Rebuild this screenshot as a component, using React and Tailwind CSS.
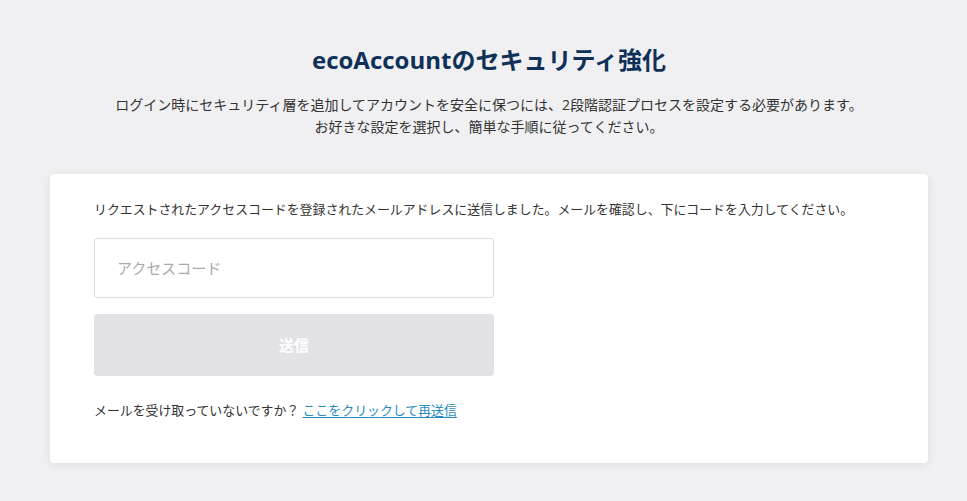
import React, { useState } from 'react';

export default function App() {
  const [code, setCode] = useState('');

  return (
    <div
      className="min-h-[501px] w-full bg-[#f0f0f2] pt-[44px] pb-[38px]"
      style={{ fontFamily: '"Open Sans", "Noto Sans CJK JP", sans-serif' }}
    >
      <div className="ml-[50px] mr-[39px]">
        {/* heading */}
        <h1 className="text-center text-[24px] leading-[32px] font-bold text-[#0f3057]">
          ecoAccountのセキュリティ強化
        </h1>
        <div className="mt-[18px] text-center text-[14px] leading-[22px] text-[#333]">
          <p>ログイン時にセキュリティ層を追加してアカウントを安全に保つには、2段階認証プロセスを設定する必要があります。</p>
          <p>お好きな設定を選択し、簡単な手順に従ってください。</p>
        </div>

        {/* card */}
        <div className="mt-[36px] h-[289px] rounded-[4px] bg-white px-[44px] pt-[24px] shadow-[0_2px_10px_rgba(0,0,0,0.08)]">
          <p className="text-[12.9px] leading-[22px] text-[#333]">
            リクエストされたアクセスコードを登録されたメールアドレスに送信しました。メールを確認し、下にコードを入力してください。
          </p>

          <input
            value={code}
            onChange={(e) => setCode(e.target.value)}
            placeholder="アクセスコード"
            className="mt-[18px] block h-[60px] w-[400px] rounded-[3px] border border-[#dcdcdf] px-[22px] text-[15px] text-[#333] placeholder-[#aaa] outline-none"
          />

          <button
            disabled
            className="mt-[16px] flex h-[62px] w-[400px] items-center justify-center rounded-[4px] bg-[#e1e1e6] text-[15px] font-bold text-white"
          >
            送信
          </button>

          <p className="mt-[23px] text-[12.9px] leading-[22px] text-[#333]">
            メールを受け取っていないですか？{' '}
            <a href="#" className="text-[#2b8bc0] underline underline-offset-2">
              ここをクリックして再送信
            </a>
          </p>
        </div>
      </div>
    </div>
  );
}
